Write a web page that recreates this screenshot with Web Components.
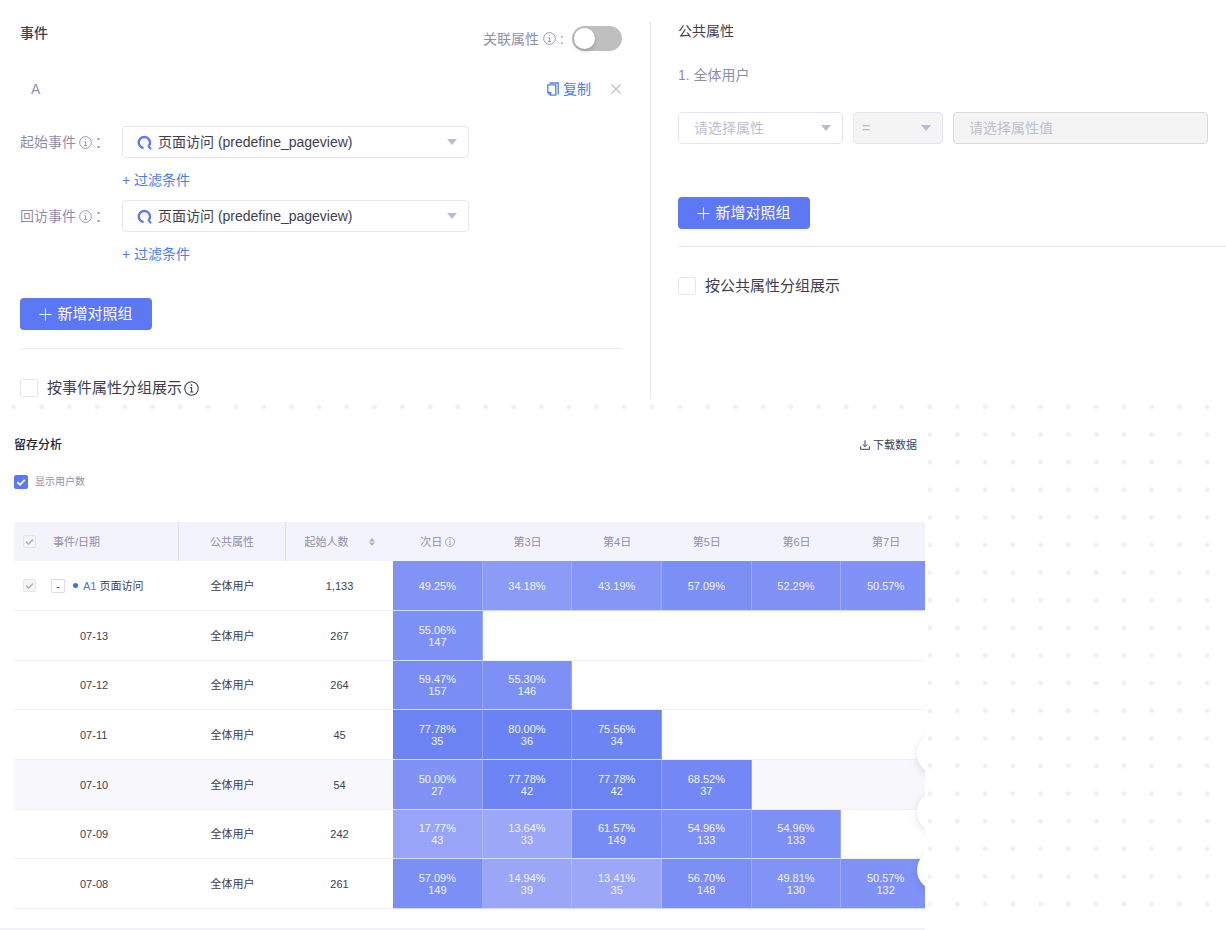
<!DOCTYPE html>
<html lang="zh-CN">
<head>
<meta charset="utf-8">
<meta name="viewport" content="width=device-width, initial-scale=1">
<title>留存分析</title>
<style>
  html { background: #fff; }
  body {
    margin: 0;
    font-family: "Liberation Sans", "Noto Sans CJK SC", sans-serif;
    font-size: 14px;
    line-height: 20px;
    color: #3f3e50;
    --accent: #5d78f5;
    --link: #4a80e8;
    --muted: #918ea9;
    --faint: #c0bdd2;
    --line: #e6e6f3;
  }
</style>
</head>
<body>
<retention-page></retention-page>

<script>
function define(name, markup, setup) {
  const template = document.createElement('template');
  template.innerHTML = markup;
  customElements.define(name, class extends HTMLElement {
    constructor() {
      super();
      this.attachShadow({ mode: 'open' }).append(template.content.cloneNode(true));
    }
    connectedCallback() {
      if (setup && !this.ready) { this.ready = true; setup(this, this.shadowRoot); }
    }
  });
}

/* Circled "i" hint; takes its size from --size and its colour from the text */
define('info-icon', `
  <style>
    :host { display: inline-block; width: var(--size, 13px); height: var(--size, 13px); flex: none; }
    svg { display: block; width: 100%; height: 100%; }
  </style>
  <svg viewBox="0 0 14 14" fill="none" stroke="currentColor" aria-hidden="true">
    <circle cx="7" cy="7" r="6.3"/>
    <path d="M5.8 6.2h1.3v4M5.5 10.3h3.2"/><circle cx="7" cy="3.9" r=".8" fill="currentColor" stroke="none"/>
  </svg>`);

/* Primary button with a thin plus */
define('add-button', `
  <style>
    :host { display: flex; }
    button {
      display: flex; align-items: center; justify-content: center; gap: 5px;
      min-width: 132px; height: 32px; padding: 0 16px; border: 0; border-radius: 4px;
      background: var(--accent); color: #fff; font: inherit; font-size: 15px; cursor: pointer;
    }
    svg { width: 13px; height: 13px; }
  </style>
  <button type="button">
    <svg viewBox="0 0 13 13" stroke="currentColor" aria-hidden="true"><path d="M6.5 .5v12M.5 6.5h12"/></svg>
    <span><slot></slot></span>
  </button>`);

/* Tick box with its label. Attributes: checked, disabled, size (small | tiny), label */
define('check-box', `
  <style>
    :host { display: flex; --box: 18px; }
    :host([size="small"]) { --box: 14px; font-size: 10px; }
    :host([size="tiny"]) { --box: 13px; }
    label { display: flex; align-items: center; gap: 9px; line-height: var(--box); }
    :host([size="small"]) label { gap: 7px; color: var(--muted); }
    :host([size="tiny"]) label { gap: 0; }
    .box { display: grid; width: var(--box); height: var(--box); flex: none; }
    input, svg { grid-area: 1 / 1; width: 100%; height: 100%; margin: 0; }
    input { appearance: none; box-sizing: border-box; border: 1px solid var(--line); border-radius: 2px; background: #fff; }
    input:checked { background: var(--accent); border-color: var(--accent); }
    input:disabled { background: #f5f5f6; border-color: #e5e4ec; }
    svg { visibility: hidden; pointer-events: none; color: #fff; }
    input:checked + svg { visibility: visible; }
    input:disabled + svg { color: #b4b4b8; }
  </style>
  <label>
    <span class="box">
      <input type="checkbox">
      <svg viewBox="0 0 14 14" fill="none" stroke="currentColor" stroke-width="1.8" aria-hidden="true"><path d="M3.3 7.1l2.7 2.7 4.8-5"/></svg>
    </span>
    <slot></slot>
  </label>`, (host, root) => {
  const input = root.querySelector('input');
  input.checked = host.hasAttribute('checked');
  input.disabled = host.hasAttribute('disabled');
  if (host.hasAttribute('label')) input.setAttribute('aria-label', host.getAttribute('label'));
});

/* Grey pill switch */
define('toggle-switch', `
  <style>
    :host { display: flex; }
    label { display: flex; align-items: center; gap: 8px; color: var(--muted); }
    .text { display: flex; align-items: center; gap: 4px; }
    input {
      appearance: none; display: flex; align-items: center; box-sizing: border-box;
      width: 50px; height: 25px; margin: 0; padding: 0 2px; border-radius: 13px; background: #bfbfbf;
    }
    input::before {
      content: ""; width: 21px; height: 21px; border-radius: 50%; background: #fff;
      box-shadow: 0 2px 4px #0003;
    }
    input:checked { justify-content: flex-end; background: var(--accent); }
  </style>
  <label><span class="text"><slot></slot><info-icon></info-icon>:</span><input type="checkbox" role="switch"></label>`);

/* Drop-down. Attributes: value, label, disabled, compact, event, placeholder */
define('drop-down', `
  <style>
    :host { display: grid; align-items: center; min-width: 0; }
    select, svg { grid-area: 1 / 1; }
    select {
      appearance: none; box-sizing: border-box; width: 100%; height: 32px; margin: 0; padding: 0 28px 0 15px;
      border: 1px solid var(--line); border-radius: 4px; background: #fff;
      font: inherit; color: #3f3e50; opacity: 1;
    }
    :host([placeholder]) select { color: var(--faint); }
    :host([event]) select { padding-left: 35px; }
    :host([compact]) select { padding-left: 8px; }
    select:disabled { background: #f4f4f4; color: #b9b9be; }
    svg { pointer-events: none; }
    .arrow { justify-self: end; width: 10px; height: 6px; margin-right: 12px; fill: #bdb9d0; }
    .mark { display: none; width: 15px; height: 15px; margin-left: 15px; }
    :host([event]) .mark { display: block; }
  </style>
  <select><option></option></select>
  <svg class="mark" viewBox="0 0 15 15" fill="none" stroke="#5d78f5" aria-hidden="true">
    <path d="M6.6 13.1A5.6 5.6 0 1 1 12 10.7" stroke-width="2.4"/><path d="M11.2 10.4q.8 2.4 3 3.6" stroke-width="2"/>
  </svg>
  <svg class="arrow" viewBox="0 0 10 6" aria-hidden="true"><path d="M0 0h10L5 6z"/></svg>`, (host, root) => {
  const select = root.querySelector('select');
  select.options[0].textContent = host.getAttribute('value');
  select.setAttribute('aria-label', host.getAttribute('label'));
  select.disabled = host.hasAttribute('disabled');
});

/* One event: label, drop-down and the link that adds a filter */
define('event-field', `
  <style>
    :host { display: grid; grid-template-columns: 102px minmax(0, 347px); row-gap: 12px; padding-bottom: 10px; align-items: center; }
    .label { display: flex; align-items: center; gap: 3px; color: var(--muted); }
    a { grid-column: 2; justify-self: start; color: var(--link); text-decoration: none; }
  </style>
  <span class="label"><slot></slot><info-icon></info-icon><span>：</span></span>
  <drop-down event value="页面访问 (predefine_pageview)" label="事件"></drop-down>
  <a href="#filter">+ 过滤条件</a>`);

define('event-panel', `
  <style>
    :host { display: block; padding: 23px 28px 2px 20px; }
    header { display: flex; justify-content: space-between; height: 28px; }
    h2 { margin: 0; font-size: 14px; font-weight: 500; }
    toggle-switch { align-self: flex-end; }
    .group { display: flex; align-items: center; margin: 28px 0 27px; padding: 0 1px 0 11px; color: var(--muted); }
    .copy { display: flex; align-items: center; gap: 4px; margin-left: auto; color: var(--link); text-decoration: none; }
    .copy svg { width: 12px; height: 14px; }
    .close { display: flex; margin-left: 20px; padding: 0; border: 0; background: none; color: #b9b6cb; }
    .close svg { width: 10px; height: 10px; }
    add-button { margin: 24px 0 18px; }
    check-box { padding-top: 30px; border-top: 1px solid #ebebf5; font-size: 15px; }
    .split { display: flex; align-items: center; gap: 2px; --size: 15px; }
  </style>
  <header><h2>事件</h2><toggle-switch>关联属性</toggle-switch></header>
  <div class="group">
    <span>A</span>
    <a class="copy" href="#copy">
      <svg viewBox="0 0 12 14" fill="none" stroke="currentColor" stroke-width="1.3" aria-hidden="true">
        <path d="M2.5 1h8.700v11.500M.8 2.800h8v10.400H3.600L.8 10.600zM.8 10.400h2.900V13"/>
      </svg>复制</a>
    <button class="close" type="button" aria-label="删除">
      <svg viewBox="0 0 10 10" stroke="currentColor" stroke-width="1.2" aria-hidden="true"><path d="M.4.4l9.2 9.2M9.6.4L.4 9.6"/></svg>
    </button>
  </div>
  <event-field>起始事件</event-field>
  <event-field>回访事件</event-field>
  <add-button>新增对照组</add-button>
  <check-box><span class="split">按事件属性分组展示<info-icon></info-icon></span></check-box>`);

define('property-panel', `
  <style>
    :host { display: block; padding-left: 27px; border-left: 1px solid var(--line); margin-top: 21px; }
    h2 { margin: 0 0 24px; font-size: 14px; font-weight: 400; }
    p { margin: 0 0 27px; color: var(--muted); }
    .filter { display: grid; grid-template-columns: 165fr 90fr 255fr; gap: 10px; margin-right: 18px; }
    input {
      box-sizing: border-box; width: 100%; height: 32px; margin: 0; padding: 0 15px; min-width: 0;
      border: 1px solid #dadadc; border-radius: 4px; background: #f4f4f4; font: inherit;
    }
    input::placeholder { color: var(--faint); opacity: 1; }
    add-button { margin: 53px 0 17px; }
    check-box { padding-top: 30px; border-top: 1px solid var(--line); font-size: 15px; }
  </style>
  <h2>公共属性</h2>
  <p>1. 全体用户</p>
  <div class="filter">
    <drop-down placeholder value="请选择属性" label="属性"></drop-down>
    <drop-down compact disabled value="=" label="运算符"></drop-down>
    <input type="text" placeholder="请选择属性值" aria-label="属性值" disabled>
  </div>
  <add-button>新增对照组</add-button>
  <check-box><span>按公共属性分组展示</span></check-box>`);

const DAYS = ['次日', '第3日', '第4日', '第5日', '第6日', '第7日'];
const ROWS = [
  { total: '1,133', cells: [['49.25'], ['34.18'], ['43.19'], ['57.09'], ['52.29'], ['50.57']] },
  { date: '07-13', total: '267', cells: [['55.06', 147]] },
  { date: '07-12', total: '264', cells: [['59.47', 157], ['55.30', 146]] },
  { date: '07-11', total: '45', cells: [['77.78', 35], ['80.00', 36], ['75.56', 34]] },
  { date: '07-10', total: '54', cells: [['50.00', 27], ['77.78', 42], ['77.78', 42], ['68.52', 37]], hover: true },
  { date: '07-09', total: '242', cells: [['17.77', 43], ['13.64', 33], ['61.57', 149], ['54.96', 133], ['54.96', 133]] },
  { date: '07-08', total: '261', cells: [['57.09', 149], ['14.94', 39], ['13.41', 35], ['56.70', 148], ['49.81', 130], ['50.57', 132]] }
];
/* The higher the rate, the deeper the blue */
function heat(rate) {
  const t = (rate - 13) / 67, low = [156, 167, 247], high = [106, 130, 244];
  return `rgb(${low.map((c, i) => Math.round(c + (high[i] - c) * t)).join()})`;
}

define('retention-table', `
  <style>
    :host { display: block; overflow: hidden; font-size: 11px; line-height: 12px; }
    table { width: calc(100% + 6px); table-layout: fixed; border-collapse: separate; border-spacing: 0; }
    .c1 { width: 165px; } .c2 { width: 107px; } .c3 { width: 107px; }
    th, td { box-sizing: border-box; padding: 0; text-align: center; vertical-align: middle; font-weight: 400; }
    thead th { height: 39px; background: #f3f3fb; color: var(--muted); }
    thead th:nth-child(-n+2) { border-right: 1px solid #dfdeea; }
    tbody > tr > * { height: 50px; color: #3f3e50; border-bottom: 1px solid #eff1f9; }
    tbody > tr:nth-child(3n) > * { height: 49px; }
    tr.hover > :not(.heat) { background: #f7f7fc; }
    tbody > tr > .heat { color: #f3f5ff; border-right: 1px solid #ffffff3b; border-bottom-color: #d5dcfb; }
    .heat span { display: block; }
    .lead { display: flex; align-items: center; padding-left: 9px; }
    thead .lead { gap: 17px; }
    .date { text-align: left; padding-left: 66px; }
    .fold { width: 14px; height: 14px; margin: 0 8px 0 15px; padding: 0; border: 1px solid #dfddeb; border-radius: 1px; background: #fff; color: inherit; font: inherit; line-height: 10px; }
    .dot { width: 5px; height: 5px; margin-right: 5px; border-radius: 50%; background: #3370ff; }
    a { margin-right: 3px; color: #3d78f2; text-decoration: none; }
    .inline { display: flex; align-items: center; justify-content: center; gap: 3px; --size: 10px; }
    .sort { gap: 20px; }
    .sort svg { width: 6px; height: 8px; fill: #b3b0c6; }
  </style>
  <table>
    <colgroup><col class="c1"><col class="c2"><col class="c3"><col span="6"></colgroup>
    <thead><tr>
      <th scope="col"><div class="lead"><check-box size="tiny" checked disabled label="全选"></check-box>事件/日期</div></th>
      <th scope="col">公共属性</th>
      <th scope="col"><div class="inline sort">起始人数<svg viewBox="0 0 6 8" aria-hidden="true"><path d="M3 0l3 3.5H0zM3 8l3-3.5H0z"/></svg></div></th>
    </tr></thead>
    <tbody></tbody>
  </table>`, (host, root) => {
  root.querySelector('thead tr').insertAdjacentHTML('beforeend', DAYS.map((day, i) =>
    `<th scope="col">${i ? day : `<div class="inline">${day}<info-icon></info-icon></div>`}</th>`).join(''));
  root.querySelector('tbody').innerHTML = ROWS.map(row => {
    const first = row.date
      ? `<th scope="row" class="date">${row.date}</th>`
      : `<th scope="row"><div class="lead"><check-box size="tiny" checked disabled label="A1"></check-box><button class="fold" type="button" aria-label="收起">-</button><span class="dot"></span><a href="#a1">A1</a>页面访问</div></th>`;
    const cells = DAYS.map((_, i) => {
      const cell = row.cells[i];
      if (!cell) return '<td></td>';
      const count = cell[1] ? `<span>${cell[1]}</span>` : '';
      return `<td class="heat" style="background:${heat(+cell[0])}"><span>${cell[0]}%</span>${count}</td>`;
    }).join('');
    return `<tr class="${row.hover ? 'hover' : ''}">${first}<td>全体用户</td><td>${row.total}</td>${cells}</tr>`;
  }).join('');
});

/* Round shortcuts that peek out from the right edge of the report */
define('side-dock', `
  <style>
    :host { display: flex; flex-direction: column; gap: 18px; }
    button { width: 40px; height: 40px; padding: 0; border: 0; border-radius: 50%; background: #fff; box-shadow: 0 2px 8px #2a2a6022; }
  </style>
  <button type="button" aria-label="帮助"></button>
  <button type="button" aria-label="反馈"></button>
  <button type="button" aria-label="客服"></button>`);

define('retention-report', `
  <style>
    :host { display: block; background: #fff; padding-right: 3px; }
    .body { position: relative; overflow: hidden; padding: 20px 0 19px 14px; border-bottom: 2px solid #f1f1f6; }
    header { display: flex; justify-content: space-between; align-items: center; margin-bottom: 20px; padding-right: 8px; }
    h2 { margin: 0; font-size: 12px; font-weight: 500; color: #26262e; }
    a { display: flex; align-items: center; gap: 3px; font-size: 11px; color: #3f3e50; text-decoration: none; }
    a svg { width: 10px; height: 10px; }
    retention-table { margin-top: 33px; }
    side-dock { position: absolute; right: -32px; bottom: 38px; }
  </style>
  <div class="body">
    <header>
      <h2>留存分析</h2>
      <a href="#download"><svg viewBox="0 0 10 10" fill="none" stroke="currentColor" aria-hidden="true"><path d="M5 .3v6.2M2.6 4.3L5 6.7l2.4-2.4M.6 6.4v2.9h8.8V6.4"/></svg>下载数据</a>
    </header>
    <check-box size="small" checked>显示用户数</check-box>
    <retention-table></retention-table>
    <side-dock></side-dock>
  </div>`);

define('retention-page', `
  <style>
    :host { display: block; }
    .settings { display: grid; grid-template-columns: 650fr 576fr; }
    .results { position: relative; padding: 16px 5px 0 0; }
    /* dotted canvas behind the report */
    .results::before {
      content: ""; position: absolute; inset: -6px 5px 12px 0;
      background: radial-gradient(circle, #f0f0f1 2px, #f0f0f100 3px) 0 0 / 28px 28px round;
    }
    retention-report { position: relative; width: 76%; box-sizing: border-box; }
  </style>
  <main>
    <section class="settings"><event-panel></event-panel><property-panel></property-panel></section>
    <section class="results"><retention-report></retention-report></section>
  </main>`);
</script>
</body>
</html>
